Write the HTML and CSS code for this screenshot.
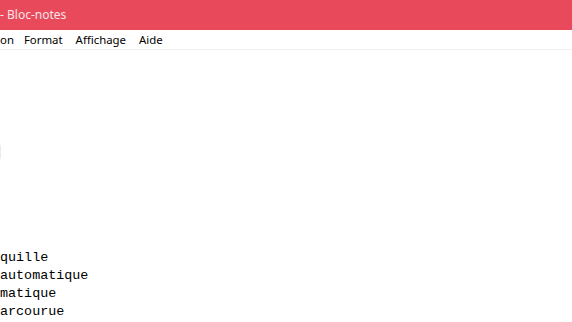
FILE: index.html
```html
<!DOCTYPE html>
<html lang="fr">
<head>
  <meta charset="UTF-8">
  <title>Bloc-notes</title>
  <link rel="stylesheet" href="styles.css">
</head>
<body>
  <header class="titlebar">
    <span class="title">- Bloc-notes</span>
  </header>
  <nav class="menubar">
    <span class="menu-item cut">on</span>
    <span class="menu-item">Format</span>
    <span class="menu-item">Affichage</span>
    <span class="menu-item">Aide</span>
  </nav>
  <main class="editor">
    <span class="caret"></span>
    <pre class="text">quille
automatique
matique
arcourue</pre>
  </main>
</body>
</html>
```
FILE: styles.css
```css
* {
  box-sizing: border-box;
  margin: 0;
  padding: 0;
}

html,
body {
  height: 100%;
  overflow: hidden;
}

body {
  background: #fff;
  font-family: "Noto Sans", "Liberation Sans", sans-serif;
  color: #000;
}

.titlebar {
  height: 30px;
  background-color: #e84a5c;
  display: flex;
  align-items: center;
}

.title {
  color: #fbe3e6;
  font-size: 12px;
  padding-bottom: 1px;
}

.menubar {
  height: 20px;
  display: flex;
  align-items: center;
  gap: 13px;
  font-size: 11.4px;
  border-bottom: 1px solid #f0f0f0;
}

.menu-item.cut {
  margin-right: -3px;
}

.editor {
  position: relative;
  height: calc(100% - 50px);
}

.caret {
  position: absolute;
  left: 0;
  top: 95px;
  width: 1px;
  height: 14px;
  background: #ececec;
}

.text {
  padding-top: 199px;
  font-family: "Liberation Mono", "DejaVu Sans Mono", monospace;
  font-size: 13.4px;
  line-height: 18px;
}
```
